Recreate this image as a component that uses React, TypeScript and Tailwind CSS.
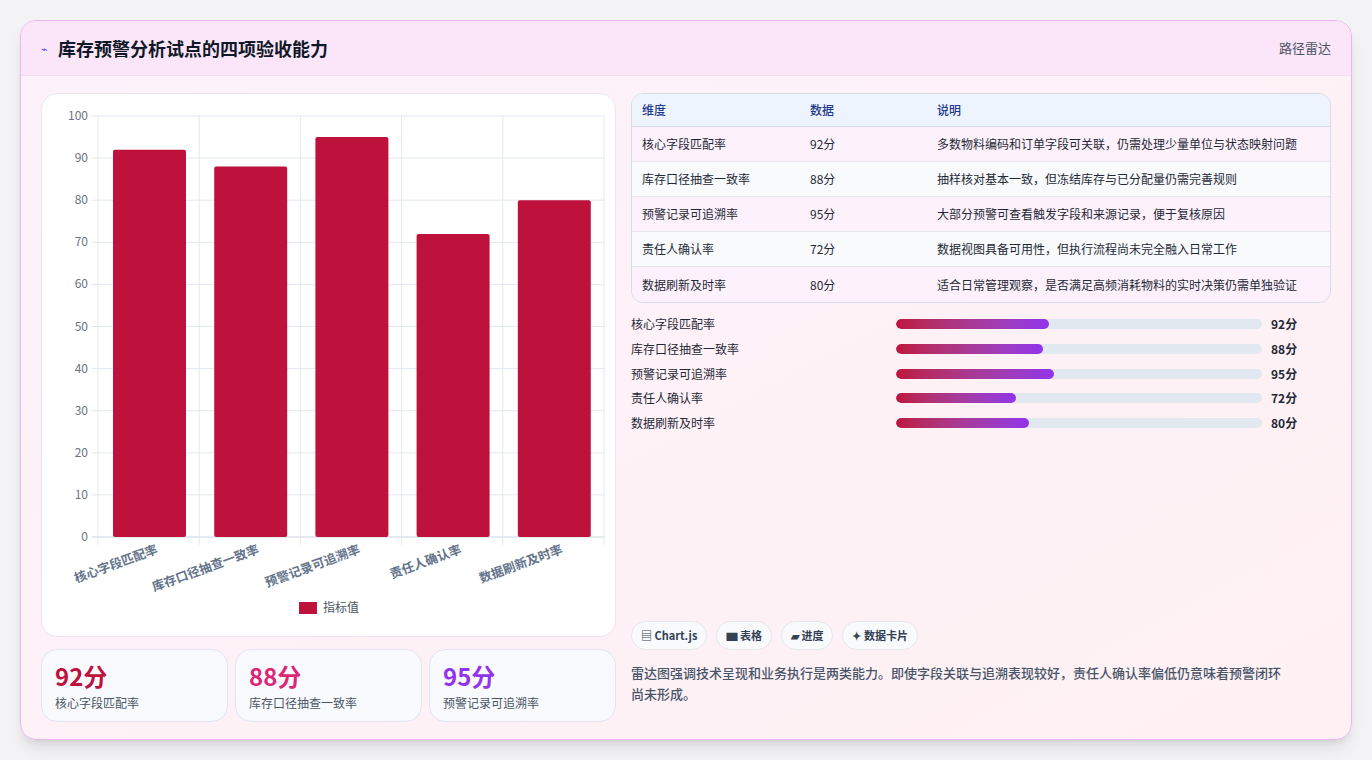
const font = { fontFamily: '"Noto Sans CJK SC", "Liberation Sans", sans-serif' };

const data = [
  { name: '核心字段匹配率', v: 92, note: '多数物料编码和订单字段可关联，仍需处理少量单位与状态映射问题' },
  { name: '库存口径抽查一致率', v: 88, note: '抽样核对基本一致，但冻结库存与已分配量仍需完善规则' },
  { name: '预警记录可追溯率', v: 95, note: '大部分预警可查看触发字段和来源记录，便于复核原因' },
  { name: '责任人确认率', v: 72, note: '数据视图具备可用性，但执行流程尚未完全融入日常工作' },
  { name: '数据刷新及时率', v: 80, note: '适合日常管理观察，是否满足高频消耗物料的实时决策仍需单独验证' },
];

function Chart() {
  const L = 56, T = 22, B = 443, R = 562;
  const cw = (R - L) / 5;
  const y = (v: number) => B - ((B - T) * v) / 100;
  return (
    <svg width="574" height="543" className="block" style={font}>
      {Array.from({ length: 11 }, (_, i) => i * 10).map((t) => (
        <g key={t}>
          <line x1={L - 6} x2={R} y1={y(t)} y2={y(t)} stroke={t === 0 ? '#cbd5e1' : '#e2e8f0'} />
          <text x={L - 10} y={y(t) + 4} textAnchor="end" fontSize="12" fill="#6b7280">{t}</text>
        </g>
      ))}
      {Array.from({ length: 6 }, (_, i) => (
        <line key={i} x1={L + i * cw} x2={L + i * cw} y1={T} y2={B + 8} stroke="#e2e8f0" />
      ))}
      {data.map((d, i) => (
        <g key={d.name}>
          <rect x={L + i * cw + 15} y={y(d.v)} width={73} height={B - y(d.v)} rx="2" fill="#be123c" />
          <text
            transform={`translate(${L + i * cw + cw / 2 + 10},${B + 16}) rotate(-20)`}
            textAnchor="end"
            fontSize="12.5"
            fontWeight="700"
            fill="#64748b"
          >
            {d.name}
          </text>
        </g>
      ))}
      <rect x="257" y="508" width="18" height="12" fill="#be123c" />
      <text x="281" y="518" fontSize="12" fill="#4b5563">指标值</text>
    </svg>
  );
}

export default function App() {
  return (
    <div className="w-[1372px] h-[760px] bg-[#f3f3f5] pt-5 pl-5" style={font}>
      <div className="w-[1332px] h-[720px] rounded-2xl border border-[#e9b6f0] bg-gradient-to-br from-[#fdf2fb] to-[#fff1f3] shadow-lg overflow-hidden flex flex-col">
        <div className="h-[55px] shrink-0 flex items-center justify-between px-5 bg-[#fbe6f9] border-b border-[#f3dcef]">
          <div className="flex items-center gap-2.5">
            <span className="text-[11px] text-[#4f46e5]">⌁</span>
            <span className="text-[18px] font-bold text-[#111827]">库存预警分析试点的四项验收能力</span>
          </div>
          <span className="text-[13px] text-[#4b5563]">路径雷达</span>
        </div>
        <div className="flex gap-[15px] px-5 pt-[17px]">
          <div className="w-[575px] flex flex-col gap-3">
            <div className="h-[544px] rounded-2xl border border-[#ede4f0] bg-white overflow-hidden">
              <Chart />
            </div>
            <div className="grid grid-cols-3 gap-[7px]">
              {[
                ['92分', '核心字段匹配率', 'text-[#be123c]'],
                ['88分', '库存口径抽查一致率', 'text-[#db2777]'],
                ['95分', '预警记录可追溯率', 'text-[#9333ea]'],
              ].map(([v, l, c]) => (
                <div key={l} className="h-[73px] rounded-2xl border border-[#e2e4f3] bg-[#f8fafe] px-[13px] pt-[11px]">
                  <div className={`text-[24px] leading-[30px] font-bold ${c}`}>{v}</div>
                  <div className="text-[12px] text-[#4b5563] mt-[3px]">{l}</div>
                </div>
              ))}
            </div>
          </div>
          <div className="w-[704px] flex flex-col">
            <div className="rounded-xl border border-[#d6dbe8] overflow-hidden text-[12px] text-[#1f2937]">
              <div className="h-[33px] flex items-center bg-[#eef4fe] border-b border-[#d6dbe8] text-[#1e3a8a] font-medium px-[10px]">
                <span className="w-[168px]">维度</span>
                <span className="w-[127px]">数据</span>
                <span>说明</span>
              </div>
              {data.map((d, i) => (
                <div
                  key={d.name}
                  className={`h-[35px] flex items-center px-[10px] ${i % 2 ? 'bg-[#f8fafc]' : 'bg-[#fdf2fb]'} ${i < 4 ? 'border-b border-[#e5e7eb]' : ''}`}
                >
                  <span className="w-[168px]">{d.name}</span>
                  <span className="w-[127px]">{d.v}分</span>
                  <span>{d.note}</span>
                </div>
              ))}
            </div>
            <div className="flex flex-col mt-[9px]">
              {data.map((d) => (
                <div key={d.name} className="h-[24.7px] flex items-center text-[12px] text-[#1f2937]">
                  <span className="w-[265px]">{d.name}</span>
                  <div className="w-[366px] h-[10px] rounded-full bg-[#e2e8f0] overflow-hidden">
                    <div
                      className="h-full rounded-full bg-gradient-to-r from-[#be123c] to-[#9333ea]"
                      style={{ width: `${d.v * 0.455}%` }}
                    />
                  </div>
                  <span className="ml-[9px] font-bold">{d.v}分</span>
                </div>
              ))}
            </div>
            <div className="mt-auto flex gap-[9px] text-[11px] font-bold text-[#334155]">
              {['▤ Chart.js', '▆ 表格', '▰ 进度', '✦ 数据卡片'].map((c) => (
                <span key={c} className="h-[29px] px-[9px] flex items-center rounded-full border border-[#e5e7eb] bg-[#f8fafc]">
                  {c}
                </span>
              ))}
            </div>
            <p className="mt-[12px] mb-[18px] text-[13px] leading-[21px] text-[#475569] font-medium pr-[40px]">
              雷达图强调技术呈现和业务执行是两类能力。即使字段关联与追溯表现较好，责任人确认率偏低仍意味着预警闭环尚未形成。
            </p>
          </div>
        </div>
      </div>
    </div>
  );
}
